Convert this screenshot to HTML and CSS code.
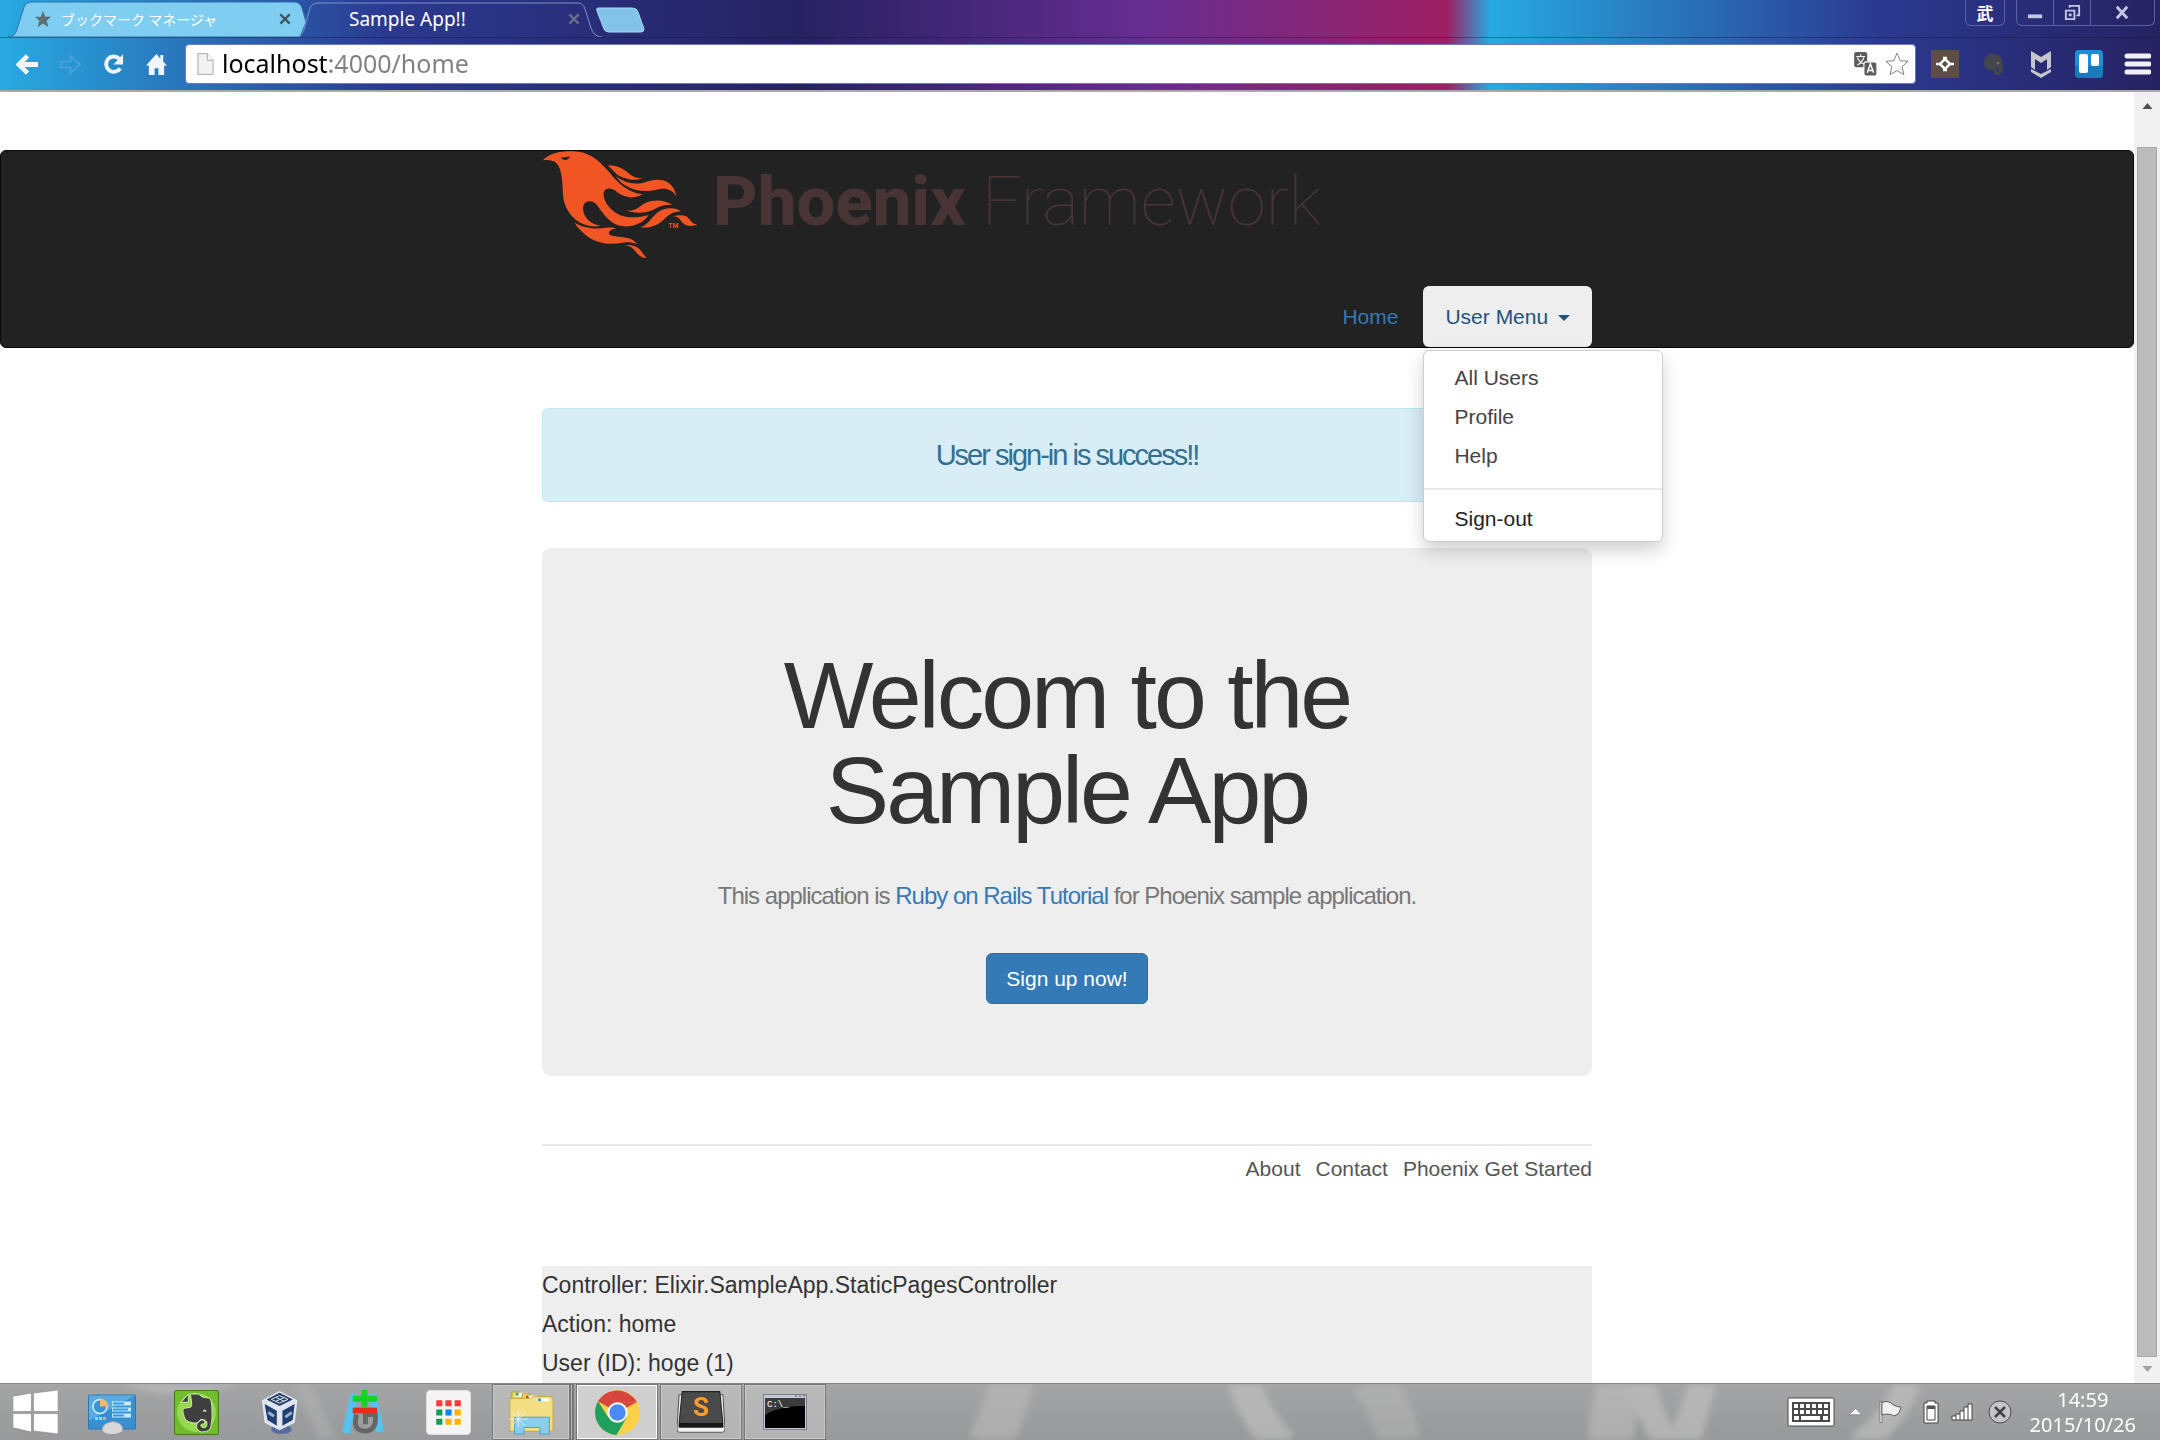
FILE: index.html
```html
<!DOCTYPE html>
<html lang="en">
<head>
<meta charset="utf-8">
<meta name="viewport" content="width=device-width, initial-scale=1">
<title>Sample App!!</title>
<link rel="stylesheet" href="styles.css">
</head>
<body>
<header class="browser">
  <div class="tabstrip">
    <div class="tab">
      <svg class="tab-shape" viewBox="0 0 304 37" preserveAspectRatio="none" aria-hidden="true"><path d="M0 37 C8 36 8 32 10 26 L16 7 Q18 2 24 2 H286 Q292 2 294 8 L298 22 L292 37Z" fill="#7fcdf0" stroke="#2f6fb0" stroke-width="1"/></svg>
      <svg class="tab-star" viewBox="0 0 24 24" aria-hidden="true"><path d="M12 1l3 8h8l-6 5 2 9-7-5-7 5 2-9-6-5h8z" fill="#5f6f76"/></svg>
      <span class="tab-title" lang="ja">ブックマーク マネージャ</span>
      <button class="tab-close" aria-label="Close tab"><svg viewBox="0 0 12 12"><path d="M2 2l8 8M10 2l-8 8" stroke="#3f5560" stroke-width="2"/></svg></button>
    </div>
    <div class="tab tab-active">
      <svg class="tab-shape" viewBox="0 0 304 37" preserveAspectRatio="none" aria-hidden="true"><path d="M0 37 C5 34 6 30 7 26 L12 8 Q14 3 20 3 H280 Q285 3 287 9 L293 28 Q296 37 304 37" fill="none" stroke="#7f92c8" stroke-width="1"/></svg>
      <span class="tab-title">Sample App!!</span>
      <button class="tab-close" aria-label="Close tab"><svg viewBox="0 0 12 12"><path d="M2 2l8 8M10 2l-8 8" stroke="#6a6f86" stroke-width="2"/></svg></button>
    </div>
    <button class="new-tab" aria-label="New tab"><svg viewBox="0 0 50 26"><path d="M2 1H36Q41 1 42 5L48 22Q48 25 45 25H13Q9 25 8 22L1 4Q0 1 2 1Z" fill="#82c3ea" stroke="#a9d8f2"/></svg></button>
    <div class="window-controls">
      <button class="profile" lang="zh">武</button>
      <div class="win-group">
        <button aria-label="Minimize"><svg viewBox="0 0 20 20"><path d="M2 12h15v4H2z" fill="#c3c6e4"/></svg></button>
        <button aria-label="Restore"><svg viewBox="0 0 20 20" fill="none" stroke="#c3c6e4" stroke-width="2"><path d="M7 5V3h10v10h-3M3 8h9v9H3zM7 12h1v1H7z"/></svg></button>
        <button class="win-close" aria-label="Close"><svg viewBox="0 0 20 20"><path d="M4 4l11 12M15 4L4 16" stroke="#c3c6e4" stroke-width="3"/></svg></button>
      </div>
    </div>
  </div>
  <div class="toolbar">
    <button class="tool" aria-label="Back"><svg viewBox="0 0 24 24"><path d="M12 3L3 12l9 9M4 12h19" fill="none" stroke="#eef6fc" stroke-width="5"/></svg></button>
    <button class="tool" aria-label="Forward"><svg viewBox="0 0 24 24"><path d="M2 9h10V3l10 9-10 9v-6H2z" fill="none" stroke="#4f9fd6" stroke-width="2"/></svg></button>
    <button class="tool" aria-label="Reload"><svg viewBox="0 0 24 24"><path d="M18 6A8 8 0 1 0 19 16" fill="none" stroke="#eef6fc" stroke-width="4"/><path d="M22 1v11H12z" fill="#eef6fc"/></svg></button>
    <button class="tool" aria-label="Home"><svg viewBox="0 0 24 24"><path d="M12 1L1 13h3v10h6v-7h4v7h6V13h3l-4-4V2h-3v4z" fill="#eef6fc"/></svg></button>
    <div class="omnibox">
      <svg class="file-icon" viewBox="0 0 18 24" aria-hidden="true"><path d="M1 1h10l6 7v15H1z" fill="#f3f3f3" stroke="#a5a5a5"/><path d="M11 1v7h6" fill="#fff" stroke="#a5a5a5"/></svg>
      <input class="address" type="text" aria-label="Address" value="localhost:4000/home">
      <button class="omni-btn" aria-label="Translate"><svg viewBox="0 0 22 24"><rect x="1" y="1" width="12" height="14" rx="2" fill="#5c5c5c"/><rect x="10" y="10" width="12" height="13" rx="2" fill="#5c5c5c" stroke="#fff"/><path d="M3 5h8M7 3v2M10 6q-2 5-6 7M4 6q2 5 6 6" fill="none" stroke="#fff"/><path d="M13 20l3-8 3 8M14 18h4" fill="none" stroke="#fff" stroke-width="1.4"/></svg></button>
      <button class="omni-btn" aria-label="Bookmark"><svg viewBox="0 0 26 26"><path d="M13 1l3.500 8.500 8.500.5-6.500 6 2 8.500L13 20l-7.500 4.500 2-8.500L1 10l8.500-.5z" fill="#fff" stroke="#777"/></svg></button>
    </div>
    <div class="extensions">
      <button aria-label="Extension"><svg viewBox="0 0 28 28"><rect width="28" height="28" fill="#5d4d42"/><path d="M14 9l5 5-5 5-5-5z" fill="none" stroke="#fff" stroke-width="2.500"/><path d="M5 14h4M19 14h4M12 8h4M12 20h4" stroke="#fff" stroke-width="2.500"/></svg></button>
      <button aria-label="Evernote clipper"><svg viewBox="0 0 28 28"><path d="M6 8l5-4h6q5 1 6 6l1 7q0 7-5 8-4 0-4-3 0-3 3-3v2l2 0q0-3-3-3l-1 2q-5 1-8-1-3-3-3-8z" fill="#45464c"/><circle cx="19" cy="13" r="1" fill="#8a8c98"/></svg></button>
      <button aria-label="Security"><svg viewBox="0 0 28 28"><path d="M4 1l10 6 10-6v16l-4 3V9l-6 4-6-4v11l-4-3zM4 19l10 5 10-5v3l-10 6-10-6z" fill="#c5c6cc"/></svg></button>
      <button aria-label="Trello"><svg viewBox="0 0 28 28"><rect width="28" height="28" rx="4" fill="#1c8fd6"/><path d="M0 16h28v8q0 4-4 4H4q-4 0-4-4z" fill="#156fa8" opacity=".6"/><rect x="4" y="4" width="9" height="19" rx="2" fill="#fff"/><rect x="16" y="4" width="8" height="12" rx="2" fill="#fff"/></svg></button>
      <button aria-label="Menu"><svg viewBox="0 0 28 28"><path d="M4 6h22M4 14h22M4 22h22" stroke="#f0f0f8" stroke-width="5" stroke-linecap="round"/></svg></button>
    </div>
  </div>
</header>

<div class="viewport">
  <div class="page">
    <nav class="navbar">
      <div class="container">
        <a class="logo" href="#" aria-label="Phoenix Framework">
          <svg class="bird" viewBox="36 18 468 324" aria-hidden="true">
            <g fill="#f15524">
              <path fill-rule="evenodd" d="M38 46C60 25 90 18 130 19C175 21 200 40 235 78C262 112 290 142 338 148C315 162 285 160 262 142C245 126 225 128 221 142C218 160 232 190 262 206C290 222 325 218 356 210C340 235 310 246 280 244C245 240 225 215 205 185C190 162 165 165 160 182C156 205 170 235 212 242C190 248 160 242 138 225C108 200 98 170 98 130C97 95 92 55 68 48C58 44 48 45 38 46ZM93 37C98 50 118 46 119 34C110 36 100 39 93 37Z"/>
              <path d="M233 62C262 58 285 75 300 88C315 100 330 102 343 97C325 108 300 105 280 98C255 90 250 72 233 62Z"/>
              <path d="M258 94C290 118 320 120 350 110C385 98 430 100 439 154C425 132 405 128 380 134C330 146 280 130 258 94Z"/>
              <path d="M286 195C310 202 325 188 340 177C370 160 405 165 429 180C405 178 390 184 370 194C345 206 310 206 286 195Z"/>
              <path d="M331 247C355 240 362 220 380 205C400 186 440 186 453 200C430 198 415 210 400 225C380 244 355 250 331 247Z"/>
              <path d="M430 214C455 208 470 210 480 225C487 235 493 238 502 238C490 244 470 246 458 234C450 224 445 214 430 214Z"/>
              <path d="M134 233C160 248 190 252 215 250C235 247 250 246 257 252C240 252 232 262 240 270C265 280 300 270 322 297C305 292 290 290 270 295C230 300 195 292 170 272C155 260 140 245 134 233Z"/>
              <path d="M283 300C310 298 325 305 335 320C342 330 345 335 351 339C330 340 322 325 310 312C302 304 295 302 283 300Z"/>
              <text x="415" y="248" font-family="Roboto, sans-serif" font-weight="700" font-size="20">TM</text>
            </g>
          </svg>
          <span class="wordmark"><b>Phoenix</b> Framework</span>
        </a>
        <ul class="nav">
          <li><a class="nav-link" href="#">Home</a></li>
          <li class="dropdown">
            <a class="nav-link nav-open" href="#">User Menu <span class="caret"></span></a>
            <ul class="menu">
              <li><a href="#">All Users</a></li>
              <li><a href="#">Profile</a></li>
              <li><a href="#">Help</a></li>
              <li class="divider"></li>
              <li><a class="sign-out" href="#">Sign-out</a></li>
            </ul>
          </li>
        </ul>
      </div>
    </nav>
    <main class="container">
      <div class="alert" role="status">User sign-in is success!!</div>
      <section class="jumbotron">
        <h1>Welcom to the<br>Sample App</h1>
        <p>This application is <a href="#">Ruby on Rails Tutorial</a> for Phoenix sample application.</p>
        <button class="btn">Sign up now!</button>
      </section>
      <footer class="footer">
        <a href="#">About</a>
        <a href="#">Contact</a>
        <a href="#">Phoenix Get Started</a>
      </footer>
      <div class="debug">
        <div>Controller: Elixir.SampleApp.StaticPagesController</div>
        <div>Action: home</div>
        <div>User (ID): hoge (1)</div>
      </div>
    </main>
  </div>
  <div class="scrollbar" aria-hidden="true">
    <svg class="scroll-arrow" viewBox="0 0 10 8"><path d="M5 1l5 6H0z" fill="#505050"/></svg>
    <div class="thumb"></div>
    <svg class="scroll-arrow" viewBox="0 0 10 8"><path d="M5 7l5-6H0z" fill="#a3a3a3"/></svg>
  </div>
</div>

<div class="taskbar">
  <svg class="wallpaper" viewBox="0 0 2160 56" preserveAspectRatio="none" aria-hidden="true">
    <g fill="none" stroke="#c4c4c3" opacity=".6">
      <path d="M110-8Q180 18 250-8" stroke-width="9"/>
      <path d="M300-5L330 60" stroke-width="16" opacity=".5"/>
      <path d="M1012-5Q1005 30 988 62" stroke-width="44" opacity=".7"/>
      <path d="M1243-5Q1255 35 1283 62" stroke-width="32"/>
      <path d="M1370-5Q1395 25 1400 62" stroke-width="42" opacity=".6"/>
      <path d="M1622-5Q1612 30 1610 62" stroke-width="46" opacity=".8"/>
      <path d="M1640-5Q1650 30 1668 62M1704-5L1680 62" stroke-width="26"/>
      <path d="M1908-5Q1900 30 1858 62" stroke-width="26"/>
      <path d="M1712-5L1695 62" stroke-width="10"/>
    </g>
  </svg>
  <div class="tasks">
    <button class="task start" aria-label="Start"><svg viewBox="0 0 44 44"><path d="M0 6l18-3v18H0zM20 3l24-3v21H20zM0 23h18v18L0 37zM20 23h24v20l-24-3z" fill="#fff" stroke="#777" stroke-width=".5"/></svg></button>
    <button class="task" aria-label="Control Panel"><svg viewBox="0 0 48 44"><rect x=".5" y="4.500" width="47" height="34" rx="1" fill="#3a8fd0" stroke="#2a78b8"/><path d="M1 5h46L1 30z" fill="#5aabe0"/><circle cx="12" cy="16" r="7" fill="#3a93d6" stroke="#d8efff" stroke-width="1.500"/><path d="M12 16V8a8 8 0 0 1 8 8z" fill="#f6b868"/><path d="M24 13h19M24 19h19M24 25h19" stroke="#c5eaff" stroke-width="4"/><path d="M25 13h11M25 19h15M25 25h11" stroke="#2e9be8" stroke-width="2"/><path d="M7 28h3M11 28h3" stroke="#6fe6ff" stroke-width="3"/><path d="M15 28h3" stroke="#ffa62e" stroke-width="3"/><path d="M14 40q0-8 11-9 10 1 10 9-3 4-11 4-8 0-10-4z" fill="#d8d8d8" stroke="#999"/></svg></button>
    <button class="task" aria-label="Evernote"><svg viewBox="0 0 44 44"><rect x=".5" y=".5" width="43" height="43" rx="2" fill="#72bd2d" stroke="#467d12"/><circle cx="22" cy="22" r="19" fill="#a5e65c" opacity=".7"/><path d="M7 12l7-8v8zM16 4h8l4 3 7 1q2 3 2 10 1 8-1 18-1 5-9 5-5-1-5-6 1-6 8-6v4q-4 0-4 2 1 2 4 2 3-1 2-6-6-4-7-1-1 3-7 2-7-1-8-6-2-5-1-8l7-1q2-1 1-7z" fill="#3f3f3f" stroke="#dff5c0" stroke-width=".8"/><path d="M28 21q2-4 4 0z" fill="#dff5c0"/></svg></button>
    <button class="task" aria-label="VirtualBox"><svg viewBox="0 0 44 48"><ellipse cx="24" cy="42" rx="11" ry="5" fill="#5a6c9c"/><path d="M22 1L41 11 38 35 22 43 6 35 3 11z" fill="#dfe6f2"/><path d="M22 3L36 10 22 17 8 10z" fill="#274066"/><path d="M13 10l9-4 9 4-9 4zM18 8l9 4M27 8l-9 4" fill="none" stroke="#e3ecf8"/><path d="M6 15l13 7v16L9 32zM38 15l-13 7v16l11-6z" fill="#1f3f70"/><path d="M10 24l6 4M28 29l7-5" stroke="#9fb2d0" stroke-width="3"/></svg></button>
    <button class="task" aria-label="Git tool"><svg viewBox="0 0 44 46"><path d="M13 4L4 44M31 4l8 39" stroke="#55c3f0" stroke-width="8"/><path d="M15 25Q10 42 24 42Q36 41 34 25H24V35" fill="none" stroke="#666" stroke-width="5"/><path d="M23 0v17M11 9h25" stroke="#11d425" stroke-width="6"/><path d="M11 21h25" stroke="#ea2a1c" stroke-width="6"/></svg></button>
    <button class="task" aria-label="App launcher"><svg viewBox="0 0 44 44"><rect x=".5" y=".5" width="43" height="43" rx="4" fill="#f4f4f4" stroke="#ddd"/><path d="M10 10h6v6h-6zM19 10h6v6h-6zM28 10h6v6h-6z" fill="#f93d35"/><path d="M10 19h6v6h-6zM10 28h6v6h-6z" fill="#109d58"/><path d="M19 19h6v6h-6z" fill="#0b84ff"/><path d="M28 19h6v6h-6zM19 28h6v6h-6zM28 28h6v6h-6z" fill="#ffb400"/></svg></button>
    <button class="task running stacked" aria-label="Explorer"><svg viewBox="0 0 48 48"><path d="M3 2h8l2 3h10v8H3z" fill="#e9cf5e" stroke="#b89a2c"/><path d="M6 3h14v4H6z" fill="#fff"/><path d="M7 3h3v3H7z" fill="#2ba84a"/><path d="M14 4h8l2 3h10v8H14z" fill="#edd468" stroke="#b89a2c"/><path d="M18 6h12v3H18z" fill="#fff"/><path d="M18 6h3v3h-3z" fill="#d43d1d"/><path d="M1 9h22l3-2h19l2 3v34H1z" fill="#f3de84" stroke="#c5a63a"/><path d="M30 9h13v3H30z" fill="#fff"/><path d="M31 9h3v3h-3z" fill="#2d8fe0"/><path d="M6 29h37v18H33v-7H16v7H6z" fill="#8ccdec" stroke="#4a9fd0"/><path d="M0 31l20 0M10 22v18M3 24l14 14M17 24L3 38" stroke="#fff" opacity=".7"/></svg></button>
    <button class="task running current" aria-label="Chrome"><svg viewBox="0 0 44 44"><circle cx="22" cy="22" r="22" fill="#fdd04a"/><path d="M22 22L3 11A22 22 0 0 1 41 12H22z" fill="#d8453c"/><path d="M3 11A22 22 0 0 0 21 44L31 27 22 22 13 27z" fill="#1fa15d"/><path d="M22 12h19l-19 10z" fill="#d8453c"/><circle cx="22" cy="22" r="10" fill="#fff"/><circle cx="22" cy="22" r="8" fill="#4c8bf5"/></svg></button>
    <button class="task running" aria-label="Sublime Text"><svg viewBox="0 0 46 42"><path d="M2 4h42l2 32q0 4-3 4H3q-3 0-3-4z" fill="#f2f2f2" stroke="#555"/><path d="M5 1h36l3 30v4H2v-4z" fill="#4a4a4a" stroke="#222"/><path d="M2 31h42v4H2z" fill="#161616"/><text x="23" y="24" text-anchor="middle" font-family="Roboto, sans-serif" font-weight="700" font-size="25" fill="#ff9c2a">S</text></svg></button>
    <button class="task running" aria-label="Command Prompt"><svg viewBox="0 0 44 36"><rect x=".5" y=".5" width="43" height="35" fill="#c3cad8" stroke="#777f90"/><rect x="2" y="4" width="40" height="30" fill="#000"/><path d="M2 4h40v8Q15 12 2 21z" fill="#3c3c3c"/><text x="4" y="13" font-family="Liberation Mono, monospace" font-size="9" fill="#fff">C:\_</text><path d="M32 2h2M36 2h2M40 2h2" stroke="#555"/></svg></button>
  </div>
  <div class="tray">
    <svg class="keyboard" viewBox="0 0 48 30" aria-hidden="true"><rect x="1" y="1" width="46" height="28" rx="1" fill="#fff" stroke="#4a4a4a"/><rect x="5" y="5" width="38" height="20" fill="#4a4a4a"/><path d="M7 9h35M7 15h35" stroke="#fff" stroke-width="4" stroke-dasharray="4 2"/><path d="M7 21h5M14 21h19M36 21h5" stroke="#fff" stroke-width="4"/></svg>
    <svg class="expand" viewBox="0 0 14 8" aria-hidden="true"><path d="M7 0l7 7H0z" fill="#f4f6fa" stroke="#666e80" stroke-width=".7"/></svg>
    <svg class="flag" viewBox="0 0 24 24" aria-hidden="true"><path d="M1 1h2v22H1z" fill="#fff" stroke="#555" stroke-width=".7"/><path d="M3 2q6-2 9 0 3 4 11 5-2 9-8 9-4-3-12-1z" fill="#f0f0f0" stroke="#555"/></svg>
    <svg class="battery" viewBox="0 0 16 24" aria-hidden="true"><path d="M4 3V1h8v2h3v20H1V3z" fill="#fff" stroke="#444"/><path d="M4 6h8v14H4z" fill="#fff" stroke="#444"/><path d="M4 6h8v3H4z" fill="#555"/></svg>
    <svg class="signal" viewBox="0 0 22 18" aria-hidden="true"><path d="M1 17v-4h4V11h4V8h4V4h4V1h4v16zM5 17v-4M9 17v-6M13 17V8M17 17V4" fill="#fff" stroke="#444"/></svg>
    <svg class="muted" viewBox="0 0 24 24" aria-hidden="true"><circle cx="12" cy="12" r="11" fill="#c5c5c8" stroke="#4a4a4a"/><path d="M7 7l10 10M17 7L7 17" stroke="#444" stroke-width="2.500"/></svg>
    <div class="clock"><span>14:59</span><span>2015/10/26</span></div>
  </div>
</div>
</body>
</html>
```
FILE: styles.css
```css
* {
  box-sizing: border-box;
}

body {
  margin: 0;
  height: 100vh;
  display: flex;
  flex-direction: column;
  overflow: hidden;
  background: #fff;
  color: #333;
  font-family: "Liberation Sans", Arial, sans-serif;
  font-size: 21px;
  line-height: 30px;
}

button {
  margin: 0;
  padding: 0;
  border: 0;
  background: none;
  font: inherit;
  color: inherit;
}

svg {
  display: block;
  flex: none;
}

ul {
  margin: 0;
  padding: 0;
  list-style: none;
}

a {
  color: #337ab7;
  text-decoration: none;
}

/* Browser frame */
.browser {
  flex: none;
  border-bottom: 2px solid #a9a9a9;
  background: linear-gradient(to right, #27aae1 0, #2b3990 18%, #262262 37%, #662d91 53%, #9e1f63 67%, #27aae1 69%, #2b3990 87%, #262262 100%);
  font-family: "Noto Sans", "Noto Sans CJK JP", sans-serif;
}

.tabstrip {
  display: flex;
  height: 38px;
  padding-left: 8px;
  border-bottom: 1px solid rgba(20, 20, 60, 0.4);
}

.tab {
  position: relative;
  display: flex;
  align-items: center;
  gap: 9px;
  width: 290px;
  padding: 0 6px 0 26px;
  color: #fff;
  font-size: 19px;
}

.tab-active {
  width: 298px;
  padding-left: 51px;
  padding-right: 15px;
}

.tab-shape {
  position: absolute;
  left: 0;
  top: 0;
  width: 304px;
  height: 37px;
}

.tab-star {
  position: relative;
  width: 18px;
  height: 18px;
}

.tab-title {
  position: relative;
  flex: 1;
  white-space: nowrap;
}

.tab-title:lang(ja) {
  font-family: "Noto Sans CJK JP", sans-serif;
  font-size: 14px;
}

.tab-close {
  position: relative;
}

.tab-close svg {
  width: 14px;
  height: 14px;
}

.new-tab {
  align-self: flex-start;
  padding-top: 7px;
}

.new-tab svg {
  width: 50px;
  height: 26px;
}

.window-controls {
  display: flex;
  gap: 11px;
  height: 26px;
  margin-left: auto;
  margin-right: 5px;
}

.profile {
  width: 40px;
  border: 1px solid #5a61a8;
  border-top: 0;
  border-radius: 0 0 6px 6px;
  color: #fff;
  font-family: "Noto Sans CJK JP", sans-serif;
  font-size: 17px;
  font-weight: 700;
  line-height: 24px;
}

.win-group {
  display: flex;
  border: 1px solid #5a61a8;
  border-top: 0;
  border-radius: 0 0 6px 6px;
}

.win-group button {
  display: grid;
  place-items: center;
  width: 37px;
  border-right: 1px solid #5a61a8;
}

.win-group .win-close {
  width: 63px;
  border-right: 0;
}

.win-group svg {
  width: 19px;
  height: 19px;
}

.toolbar {
  display: flex;
  align-items: center;
  height: 52px;
  padding: 0 9px 0 6px;
}

.tool {
  display: grid;
  place-items: center;
  width: 43px;
  height: 38px;
}

.tool svg {
  width: 23px;
  height: 23px;
}

.omnibox {
  display: flex;
  flex: 1;
  align-items: center;
  gap: 8px;
  height: 40px;
  margin-left: 7px;
  padding: 0 6px 0 11px;
  border: 1px solid #6c7ab8;
  border-radius: 4px;
  background: #fff;
}

.file-icon {
  width: 17px;
  height: 24px;
}

.address {
  flex: 1;
  height: 36px;
  padding: 0 0 2px;
  border: 0;
  outline: 0;
  background: linear-gradient(to right, #000 108px, #808080 108px);
  background-clip: text;
  -webkit-background-clip: text;
  color: transparent;
  font-family: "Noto Sans", sans-serif;
  font-size: 25px;
}

.omni-btn svg {
  width: 24px;
  height: 26px;
}

.extensions {
  display: flex;
  gap: 20px;
  margin-left: 15px;
}

.extensions svg {
  width: 28px;
  height: 28px;
}

/* Scrolled document */
.viewport {
  display: flex;
  flex: 1;
  min-height: 0;
}

.page {
  flex: 1;
  overflow: hidden;
  padding-top: 58px;
}

.scrollbar {
  display: flex;
  flex-direction: column;
  justify-content: space-between;
  align-items: center;
  width: 26px;
  padding: 10px 0;
  background: #f1f1f1;
}

.scroll-arrow {
  width: 11px;
  height: 8px;
}

.thumb {
  flex: 1;
  width: 20px;
  margin: 37px 0 8px;
  border: 1px solid #a8a8a8;
  background: #bcbcbc;
}

.container {
  width: 1050px;
  max-width: 100%;
  margin: 0 auto;
}

.navbar {
  margin-bottom: 60px;
  border: 1px solid #080808;
  border-radius: 6px;
  background: #222;
}

.logo {
  display: flex;
  gap: 15px;
  height: 108px;
  margin-bottom: 27px;
}

.bird {
  width: 156px;
  height: 108px;
}

.wordmark {
  color: #483434;
  font-family: Roboto, sans-serif;
  font-size: 69px;
  font-weight: 250;
  line-height: 102px;
}

.wordmark b {
  font-weight: 800;
}

.nav {
  display: flex;
  justify-content: flex-end;
  gap: 3px;
}

.dropdown {
  position: relative;
}

.nav-link {
  display: block;
  padding: 16px 22px 15px;
  border-radius: 6px;
}

.nav-open {
  background: #eee;
  color: #23527c;
}

.caret {
  display: inline-block;
  margin-left: 4px;
  vertical-align: middle;
  border-top: 6px solid;
  border-left: 6px solid transparent;
  border-right: 6px solid transparent;
}

.menu {
  position: absolute;
  z-index: 1;
  top: 100%;
  left: 0;
  width: 240px;
  margin-top: 3px;
  padding: 7px 0 3px;
  border: 1px solid #ccc;
  border-radius: 6px;
  background: #fff;
  box-shadow: 0 9px 18px rgba(0, 0, 0, 0.18);
}

.menu a {
  display: block;
  padding: 5px 30px 4px;
  color: #444;
}

.menu .sign-out {
  color: #222;
}

.divider {
  height: 2px;
  margin: 13px 0 9px;
  background: #e9e9e9;
}

.alert {
  margin-bottom: 46px;
  padding: 31px 22px;
  border: 1px solid #bce8f1;
  border-radius: 6px;
  background: #d9edf7;
  color: #31708f;
  font-size: 29px;
  letter-spacing: -2px;
  text-align: center;
}

.jumbotron {
  padding: 100px 90px 72px;
  border-radius: 9px;
  background: #eee;
  text-align: center;
}

.jumbotron h1 {
  margin: 0 0 41px;
  font-size: 95px;
  font-weight: 400;
  letter-spacing: -3px;
  line-height: 95px;
}

.jumbotron p {
  margin: 0 0 40px;
  color: #777;
  font-size: 24px;
  letter-spacing: -1px;
  line-height: 34px;
}

.btn {
  padding: 10px 19px 9px;
  border: 1px solid #2e6da4;
  border-radius: 6px;
  background: #337ab7;
  color: #fff;
}

.footer {
  display: flex;
  justify-content: flex-end;
  gap: 15px;
  margin: 68px 0 82px;
  padding-top: 8px;
  border-top: 2px solid #eaeaea;
}

.footer a {
  color: #555;
}

.debug {
  padding-bottom: 80px;
  background: #eee;
  font-size: 23px;
  line-height: 39px;
}

/* Desktop taskbar */
.taskbar {
  position: relative;
  display: flex;
  flex: none;
  justify-content: space-between;
  height: 57px;
  overflow: hidden;
  border-top: 1px solid #858585;
  background: linear-gradient(#a4a5a6, #98999a);
}

.wallpaper {
  position: absolute;
  inset: 0;
  width: 100%;
  height: 100%;
  filter: blur(3px);
}

.tasks,
.tray {
  position: relative;
  display: flex;
  align-items: center;
}

.task {
  display: grid;
  place-items: center;
  width: 84px;
  height: 56px;
}

.task svg {
  height: 45px;
  max-width: 48px;
}

.start {
  width: 70px;
}

.running {
  width: 82px;
  margin-left: 2px;
  border: 1px solid #777;
  background: rgba(205, 205, 205, 0.5);
  box-shadow: inset 0 0 0 1px #c9c9c9;
}

.running:last-child svg {
  height: 36px;
}

.stacked {
  border-right: 5px double #777;
}

.current {
  background: #cfcfcf;
  box-shadow: inset 0 0 0 1px #fff;
}

.tray {
  padding-right: 24px;
}

.keyboard {
  width: 48px;
  height: 30px;
  margin-right: 14px;
}

.expand {
  width: 13px;
  height: 8px;
  margin-right: 17px;
}

.flag {
  width: 23px;
  height: 24px;
  margin-right: 21px;
}

.battery {
  width: 16px;
  height: 24px;
  margin-right: 12px;
}

.signal {
  width: 22px;
  height: 18px;
  margin-right: 15px;
}

.muted {
  width: 24px;
  height: 24px;
  margin-right: 18px;
}

.clock {
  display: flex;
  flex-direction: column;
  align-items: center;
  color: #fff;
  font-family: "Noto Sans", sans-serif;
  font-size: 20px;
  line-height: 25px;
}
```
